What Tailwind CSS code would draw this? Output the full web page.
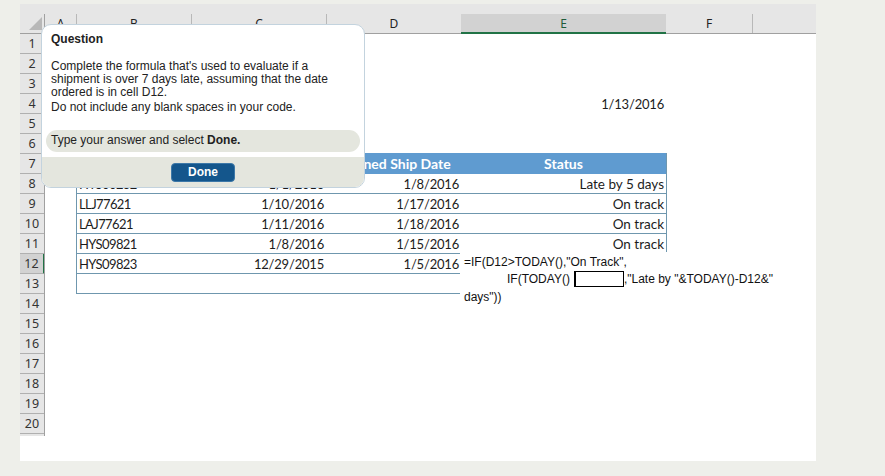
<!DOCTYPE html>
<html>
<head>
<meta charset="utf-8">
<script src="https://cdn.jsdelivr.net/npm/@tailwindcss/browser@4"></script>
</head>
<body class="bg-[#eeefea] overflow-hidden">
<div class="w-[885px] h-[476px] pt-[4px] pl-[20px]">
  <div class="relative w-[796px] h-[457px] bg-white overflow-hidden">
    <!-- top strip -->
    <div class="h-[10px] bg-[#e6e6e6]"></div>
    <!-- column headers -->
    <div class="flex h-[20px] bg-[#e6e6e6] border-b border-[#a0a0a0] font-['Noto_Sans'] text-[12px] leading-[19px] text-[#222] text-center">
      <div class="w-[25px] relative border-r border-[#a0a0a0]"><svg class="absolute left-[9px] top-[3px]" width="13" height="13" viewBox="0 0 13 13"><path d="M0 13 L13 13 L13 0 Z" fill="#b8b8b8"/></svg></div>
      <div class="w-[32px] border-r border-[#b8b8b8]">A</div>
      <div class="w-[115px] border-r border-[#b8b8b8]">B</div>
      <div class="w-[135px] border-r border-[#b8b8b8]">C</div>
      <div class="w-[134px]">D</div>
      <div class="w-[205px] bg-[#d2d2d2] border-b-2 border-[#217346] h-[20px] text-[#1f5c3a]">E</div>
      <div class="w-[87px] border-r border-[#b8b8b8]">F</div>
    </div>
    <!-- sheet -->
    <div class="flex">
      <div class="w-[25px] font-['Noto_Sans'] text-[12.5px] leading-[20px] text-[#333] text-center bg-[#e6e6e6] border-r border-[#a0a0a0] h-[402px] overflow-hidden">
        <div class="h-[20px] border-b border-[#b0b0b0]">1</div>
        <div class="h-[20px] border-b border-[#b0b0b0]">2</div>
        <div class="h-[20px] border-b border-[#b0b0b0]">3</div>
        <div class="h-[20px] border-b border-[#b0b0b0]">4</div>
        <div class="h-[20px] border-b border-[#b0b0b0]">5</div>
        <div class="h-[20px] border-b border-[#b0b0b0]">6</div>
        <div class="h-[20px] border-b border-[#b0b0b0]">7</div>
        <div class="h-[20px] border-b border-[#b0b0b0]">8</div>
        <div class="h-[20px] border-b border-[#b0b0b0]">9</div>
        <div class="h-[20px] border-b border-[#b0b0b0]">10</div>
        <div class="h-[20px] border-b border-[#b0b0b0]">11</div>
        <div class="h-[20px] border-b border-[#b0b0b0] bg-[#d2d2d2] border-r-2 border-r-[#217346] -mr-px">12</div>
        <div class="h-[20px] border-b border-[#b0b0b0]">13</div>
        <div class="h-[20px] border-b border-[#b0b0b0]">14</div>
        <div class="h-[20px] border-b border-[#b0b0b0]">15</div>
        <div class="h-[20px] border-b border-[#b0b0b0]">16</div>
        <div class="h-[20px] border-b border-[#b0b0b0]">17</div>
        <div class="h-[20px] border-b border-[#b0b0b0]">18</div>
        <div class="h-[20px] border-b border-[#b0b0b0]">19</div>
        <div class="h-[20px] border-b border-[#b0b0b0]">20</div>
      </div>
      <div class="pl-[31px] font-['Lato'] text-[13px] leading-[21px] text-[#1c1c1c]">
        <div class="h-[60px] w-[590px]"></div>
        <div class="h-[20px] w-[590px] text-right pr-[2px] tracking-[-0.2px]">1/13/2016</div>
        <div class="h-[39px] w-[590px]"></div>
        <!-- table -->
        <div class="w-[591px] border-r border-[#6f97ae]">
          <div class="flex h-[21px] bg-[#5f9bd0] text-white font-bold text-[14px] leading-[22px]">
            <div class="w-[115px] pl-[3px]">Order Number</div>
            <div class="w-[135px] text-center">Date Ordered</div>
            <div class="w-[135px] text-center">Planned Ship Date</div>
            <div class="w-[205px] text-center">Status</div>
          </div>
          <div class="flex h-[20px] border-b border-l border-[#6f97ae]">
            <div class="w-[114px] pl-[2px] tracking-[-0.6px]">HYS00232</div>
            <div class="w-[135px] text-right pr-[2px] tracking-[-0.2px]">1/1/2016</div>
            <div class="w-[135px] text-right pr-[2px] tracking-[-0.2px]">1/8/2016</div>
            <div class="w-[205px] text-right pr-[2px] text-[13.5px]">Late by 5 days</div>
          </div>
          <div class="flex h-[20px] border-b border-l border-[#6f97ae]">
            <div class="w-[114px] pl-[2px] tracking-[-0.6px]">LLJ77621</div>
            <div class="w-[135px] text-right pr-[2px] tracking-[-0.2px]">1/10/2016</div>
            <div class="w-[135px] text-right pr-[2px] tracking-[-0.2px]">1/17/2016</div>
            <div class="w-[205px] text-right pr-[2px] text-[13.5px]">On track</div>
          </div>
          <div class="flex h-[20px] border-b border-l border-[#6f97ae]">
            <div class="w-[114px] pl-[2px] tracking-[-0.6px]">LAJ77621</div>
            <div class="w-[135px] text-right pr-[2px] tracking-[-0.2px]">1/11/2016</div>
            <div class="w-[135px] text-right pr-[2px] tracking-[-0.2px]">1/18/2016</div>
            <div class="w-[205px] text-right pr-[2px] text-[13.5px]">On track</div>
          </div>
          <div class="flex h-[20px] border-b border-l border-[#6f97ae]">
            <div class="w-[114px] pl-[2px] tracking-[-0.6px]">HYS09821</div>
            <div class="w-[135px] text-right pr-[2px] tracking-[-0.2px]">1/8/2016</div>
            <div class="w-[135px] text-right pr-[2px] tracking-[-0.2px]">1/15/2016</div>
            <div class="w-[205px] text-right pr-[2px] text-[13.5px]">On track</div>
          </div>
          <div class="flex h-[20px] border-b border-l border-[#6f97ae]">
            <div class="w-[114px] pl-[2px] tracking-[-0.6px]">HYS09823</div>
            <div class="w-[135px] text-right pr-[2px] tracking-[-0.2px]">12/29/2015</div>
            <div class="w-[135px] text-right pr-[2px] tracking-[-0.2px]">1/5/2016</div>
            <div class="w-[205px]"></div>
          </div>
          <div class="h-[20px] border-b border-l border-[#6f97ae]"></div>
        </div>
      </div>
    </div>

    <!-- formula overlay -->
    <div class="absolute left-[440px] top-[248px] w-[330px] h-[60px] bg-white pl-[4px] pt-[2px] font-['Liberation_Sans'] text-[12px] leading-[17px] text-[#111]">
      <div class="h-[17px]">=IF(D12&gt;TODAY(),"On Track",</div>
      <div class="h-[16px] flex items-center pl-[43px]"><span>IF(TODAY()</span><span class="block w-[50px] h-[16px] ml-[4px] border border-black border-l-2 bg-white"></span><span>,"Late by "&amp;TODAY()-D12&amp;"</span></div>
      <div class="h-[19px] pt-[2px]">days"))</div>
    </div>

    <!-- question dialog -->
    <div class="absolute left-[21px] top-[20px] w-[324px] h-[164px] bg-white rounded-[10px] border border-[#c3d3de] overflow-hidden flex flex-col font-['Liberation_Sans'] text-[12px] text-[#222]">
      <div class="h-[105px] px-[9px] pt-[6px]">
        <div class="font-bold leading-[16px] h-[29px]">Question</div>
        <div class="leading-[13px] w-[300px]">Complete the formula that's used to evaluate if a shipment is over 7 days late, assuming that the date ordered is in cell D12.</div>
        <div class="leading-[16px]">Do not include any blank spaces in your code.</div>
      </div>
      <div class="h-[22px] mx-[4px] mb-[5px] rounded-full bg-[#e4e6de] px-[5px] leading-[20px]">Type your answer and select <span class="font-bold">Done.</span></div>
      <div class="flex-1 bg-[#e4e6de] flex justify-center pt-[6px]">
        <div class="w-[64px] h-[19px] rounded-[4px] bg-[#14568c] border border-[#3d78a8] text-white font-bold text-center leading-[17px]">Done</div>
      </div>
    </div>
  </div>
</div>
</body>
</html>
